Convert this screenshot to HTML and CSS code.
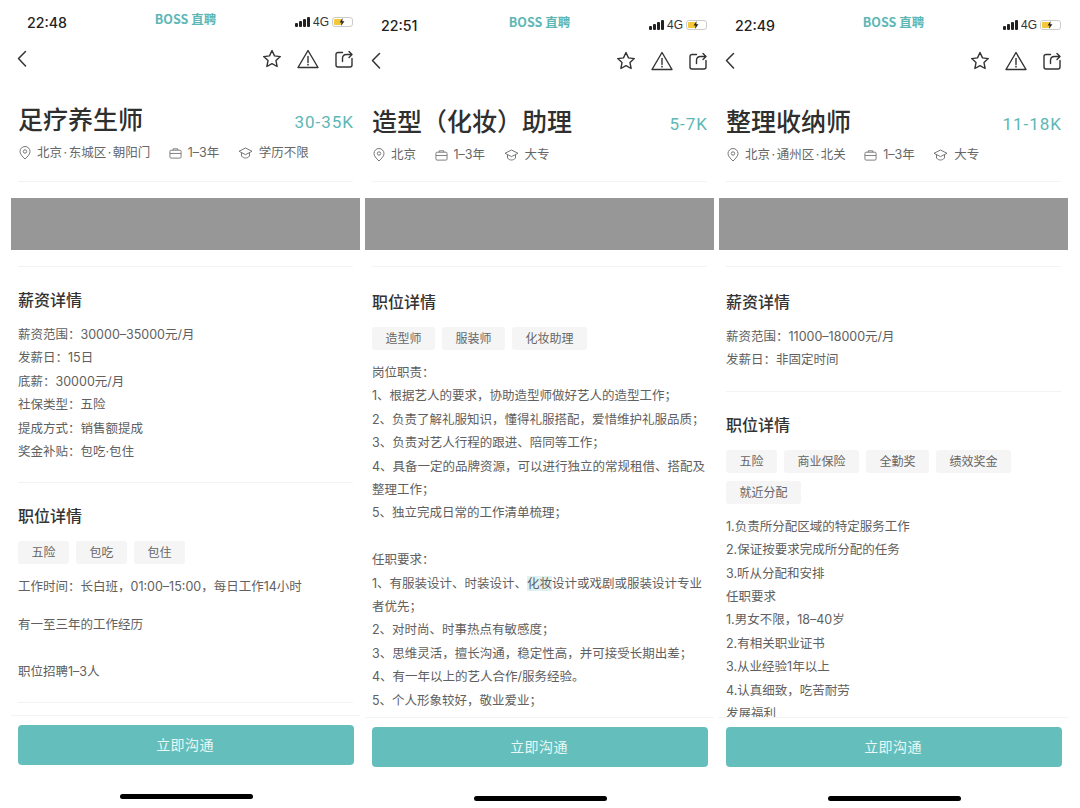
FILE: index.html
```html
<!DOCTYPE html>
<html lang="zh-CN">
<head>
    <meta charset="UTF-8">
    <meta name="viewport" content="width=device-width, initial-scale=1.0">
    <title>BOSS直聘 职位详情</title>
    <link rel="stylesheet" href="styles.css">
</head>
<body>
    <svg class="sprites" width="0" height="0">
        <symbol id="i-back" viewBox="0 0 12 20"><path d="M9.5 2.5 2.5 9.5l7 7.5" fill="none" stroke="currentColor" stroke-width="1.5" stroke-linecap="round" stroke-linejoin="round"/></symbol>
        <symbol id="i-star" viewBox="0 0 20 20"><path d="M10 1.500l2.500 5.400 5.800.7-4.300 4 1.100 5.900-5.100-2.900-5.100 2.900 1.100-5.900-4.300-4 5.800-.7z" fill="none" stroke="currentColor" stroke-width="1.400" stroke-linejoin="round"/></symbol>
        <symbol id="i-warn" viewBox="0 0 22 20"><path d="M11 1.500 21 18.500H1z" fill="none" stroke="currentColor" stroke-width="1.400" stroke-linejoin="round"/><path d="M11 7.500v6" stroke="currentColor" stroke-width="1.400" stroke-linecap="round"/><circle cx="11" cy="15.700" r=".85" fill="currentColor"/></symbol>
        <symbol id="i-share" viewBox="0 0 18 18"><path d="M7.500 2.500H3a2 2 0 0 0-2 2v10.500a2 2 0 0 0 2 2h12a2 2 0 0 0 2-2V8.500" fill="none" stroke="currentColor" stroke-width="1.400" stroke-linecap="round"/><path d="M7.500 11.500V8.500c0-2.500 1.500-4 4-4h5M14 1.500l3 3-3 3" fill="none" stroke="currentColor" stroke-width="1.400" stroke-linecap="round" stroke-linejoin="round"/></symbol>
        <symbol id="i-pin" viewBox="0 0 12 14"><path d="M6 13C3 10.200 1 7.900 1 5.500a5 5 0 0 1 10 0C11 7.900 9 10.200 6 13z" fill="none" stroke="currentColor" stroke-width="1"/><circle cx="6" cy="5.500" r="1.700" fill="none" stroke="currentColor"/></symbol>
        <symbol id="i-case" viewBox="0 0 14 12"><rect x="1" y="3" width="12" height="8.500" rx="1.200" fill="none" stroke="currentColor"/><path d="M4.500 3V1.500h5V3M1 6.500h12" fill="none" stroke="currentColor"/></symbol>
        <symbol id="i-cap" viewBox="0 0 15 12"><path d="M7.500 1 14 4.300 7.500 7.600 1 4.300z" fill="none" stroke="currentColor" stroke-linejoin="round"/><path d="M3.500 6v3c1 1.400 2.500 2 4 2s3-.6 4-2V6" fill="none" stroke="currentColor"/></symbol>
        <symbol id="i-bolt" viewBox="0 0 6 8"><path d="M3.600 0 .6 4.500h2L2 8l3.400-4.800H3.300z" fill="currentColor"/></symbol>
    </svg>

    <div class="screens">
        <!-- 足疗养生师 -->
        <div class="phone phone-high">
            <div class="status">
                <span class="time">22:48</span>
                <span class="logo">BOSS 直聘</span>
                <span class="status-right">
                    <span class="signal"><i></i><i></i><i></i><i></i></span>
                    <span class="net">4G</span>
                    <span class="battery"><b></b><svg class="ic-bolt"><use href="#i-bolt"/></svg></span>
                </span>
            </div>
            <div class="nav">
                <svg class="ic-back"><use href="#i-back"/></svg>
                <span class="nav-right">
                    <svg class="ic-star"><use href="#i-star"/></svg>
                    <svg class="ic-warn"><use href="#i-warn"/></svg>
                    <svg class="ic-share"><use href="#i-share"/></svg>
                </span>
            </div>
            <div class="main">
                <div class="head">
                    <h1>足疗养生师</h1>
                    <span class="salary">30-35K</span>
                </div>
                <div class="meta">
                    <span><svg class="ic-pin"><use href="#i-pin"/></svg>北京<i class="dot">·</i>东城区<i class="dot">·</i>朝阳门</span>
                    <span><svg class="ic-case"><use href="#i-case"/></svg>1–3年</span>
                    <span><svg class="ic-cap"><use href="#i-cap"/></svg>学历不限</span>
                </div>
                <div class="banner"></div>
                <div class="section">
                    <h2>薪资详情</h2>
                    <p>薪资范围：30000–35000元/月</p>
                    <p>发薪日：15日</p>
                    <p>底薪：30000元/月</p>
                    <p>社保类型：五险</p>
                    <p>提成方式：销售额提成</p>
                    <p>奖金补贴：包吃·包住</p>
                </div>
                <div class="section">
                    <h2>职位详情</h2>
                    <div class="tags"><span>五险</span><span>包吃</span><span>包住</span></div>
                    <p>工作时间：长白班，01:00–15:00，每日工作14小时</p>
                    <p class="gap">有一至三年的工作经历</p>
                    <p>&nbsp;</p>
                    <p>职位招聘1–3人</p>
                </div>
                <div class="section"></div>
            </div>
            <div class="footer">
                <div class="btn">立即沟通</div>
                <div class="home"></div>
            </div>
        </div>

        <!-- 造型助理 -->
        <div class="phone">
            <div class="status">
                <span class="time">22:51</span>
                <span class="logo">BOSS 直聘</span>
                <span class="status-right">
                    <span class="signal"><i></i><i></i><i></i><i></i></span>
                    <span class="net">4G</span>
                    <span class="battery"><b></b><svg class="ic-bolt"><use href="#i-bolt"/></svg></span>
                </span>
            </div>
            <div class="nav">
                <svg class="ic-back"><use href="#i-back"/></svg>
                <span class="nav-right">
                    <svg class="ic-star"><use href="#i-star"/></svg>
                    <svg class="ic-warn"><use href="#i-warn"/></svg>
                    <svg class="ic-share"><use href="#i-share"/></svg>
                </span>
            </div>
            <div class="main">
                <div class="head">
                    <h1>造型（化妆）助理</h1>
                    <span class="salary">5-7K</span>
                </div>
                <div class="meta">
                    <span><svg class="ic-pin"><use href="#i-pin"/></svg>北京</span>
                    <span><svg class="ic-case"><use href="#i-case"/></svg>1–3年</span>
                    <span><svg class="ic-cap"><use href="#i-cap"/></svg>大专</span>
                </div>
                <div class="banner"></div>
                <div class="section">
                    <h2>职位详情</h2>
                    <div class="tags"><span>造型师</span><span>服装师</span><span>化妆助理</span></div>
                    <p>岗位职责：</p>
                    <p>1、根据艺人的要求，协助造型师做好艺人的造型工作；</p>
                    <p>2、负责了解礼服知识，懂得礼服搭配，爱惜维护礼服品质；</p>
                    <p>3、负责对艺人行程的跟进、陪同等工作；</p>
                    <p>4、具备一定的品牌资源，可以进行独立的常规租借、搭配及整理工作；</p>
                    <p>5、独立完成日常的工作清单梳理；</p>
                    <p>&nbsp;</p>
                    <p>任职要求：</p>
                    <p>1、有服装设计、时装设计、<mark>化妆</mark>设计或戏剧或服装设计专业者优先；</p>
                    <p>2、对时尚、时事热点有敏感度；</p>
                    <p>3、思维灵活，擅长沟通，稳定性高，并可接受长期出差；</p>
                    <p>4、有一年以上的艺人合作/服务经验。</p>
                    <p>5、个人形象较好，敬业爱业；</p>
                    <p>6、有相关工作经验者、熟悉时尚行业者优先考虑；</p>
                </div>
            </div>
            <div class="footer">
                <div class="btn">立即沟通</div>
                <div class="home"></div>
            </div>
        </div>

        <!-- 整理收纳师 -->
        <div class="phone">
            <div class="status">
                <span class="time">22:49</span>
                <span class="logo">BOSS 直聘</span>
                <span class="status-right">
                    <span class="signal"><i></i><i></i><i></i><i></i></span>
                    <span class="net">4G</span>
                    <span class="battery"><b></b><svg class="ic-bolt"><use href="#i-bolt"/></svg></span>
                </span>
            </div>
            <div class="nav">
                <svg class="ic-back"><use href="#i-back"/></svg>
                <span class="nav-right">
                    <svg class="ic-star"><use href="#i-star"/></svg>
                    <svg class="ic-warn"><use href="#i-warn"/></svg>
                    <svg class="ic-share"><use href="#i-share"/></svg>
                </span>
            </div>
            <div class="main">
                <div class="head">
                    <h1>整理收纳师</h1>
                    <span class="salary">11-18K</span>
                </div>
                <div class="meta">
                    <span><svg class="ic-pin"><use href="#i-pin"/></svg>北京<i class="dot">·</i>通州区<i class="dot">·</i>北关</span>
                    <span><svg class="ic-case"><use href="#i-case"/></svg>1–3年</span>
                    <span><svg class="ic-cap"><use href="#i-cap"/></svg>大专</span>
                </div>
                <div class="banner"></div>
                <div class="section">
                    <h2>薪资详情</h2>
                    <p>薪资范围：11000–18000元/月</p>
                    <p>发薪日：非固定时间</p>
                </div>
                <div class="section">
                    <h2>职位详情</h2>
                    <div class="tags"><span>五险</span><span>商业保险</span><span>全勤奖</span><span>绩效奖金</span><span>就近分配</span></div>
                    <p>1.负责所分配区域的特定服务工作</p>
                    <p>2.保证按要求完成所分配的任务</p>
                    <p>3.听从分配和安排</p>
                    <p>任职要求</p>
                    <p>1.男女不限，18–40岁</p>
                    <p>2.有相关职业证书</p>
                    <p>3.从业经验1年以上</p>
                    <p>4.认真细致，吃苦耐劳</p>
                    <p>发展福利</p>
                </div>
            </div>
            <div class="footer">
                <div class="btn">立即沟通</div>
                <div class="home"></div>
            </div>
        </div>
    </div>
</body>
</html>
```

FILE: styles.css
```css
* {
    box-sizing: border-box;
}
html, body {
    margin: 0;
    background: #fff;
}
body {
    width: 1080px;
    height: 808px;
    overflow: hidden;
    font-family: Inter, "Noto Sans CJK SC", sans-serif;
    color: #606060;
}
.sprites {
    position: absolute;
}
.screens {
    display: flex;
    gap: 5px;
    padding-left: 11px;
}
.phone {
    width: 349px;
    height: 808px;
    display: flex;
    flex-direction: column;
    overflow: hidden;
}
svg {
    display: block;
    flex: none;
}

/* status bar */
.status {
    height: 44px;
    padding: 6px 7px 0 16px;
    display: flex;
    align-items: center;
    justify-content: space-between;
    position: relative;
}
.time {
    font-size: 14.200px;
    font-weight: 500;
    color: #222;
}
.logo {
    position: absolute;
    left: 0;
    right: 0;
    top: 13px;
    text-align: center;
    font-family: "Noto Sans CJK SC", sans-serif;
    font-size: 12.500px;
    font-weight: 700;
    line-height: 18px;
    color: #5cb7b6;
}
.status-right {
    display: flex;
    align-items: center;
    gap: 3px;
}
.signal {
    display: flex;
    align-items: flex-end;
    gap: 1px;
    height: 10px;
}
.signal i {
    width: 3px;
    background: #222;
    border-radius: 1px;
}
.signal i:nth-child(1) { height: 4px; }
.signal i:nth-child(2) { height: 6px; }
.signal i:nth-child(3) { height: 8px; }
.signal i:nth-child(4) { height: 10px; }
.net {
    font-family: "Liberation Sans", sans-serif;
    font-size: 12px;
    color: #333;
}
.battery {
    width: 21px;
    height: 10px;
    border: 1px solid #ccc;
    border-radius: 3px;
    padding: 1px;
    position: relative;
}
.battery b {
    display: block;
    width: 8px;
    height: 6px;
    background: #f5c83c;
    border-radius: 1px;
}
.ic-bolt {
    position: absolute;
    left: 6px;
    top: 0;
    width: 6px;
    height: 8px;
    color: #222;
}

/* nav */
.nav {
    height: 32px;
    padding: 2px 7px 0;
    display: flex;
    align-items: center;
    justify-content: space-between;
    color: #333;
}
.nav-right {
    display: flex;
    align-items: center;
}
.ic-back { width: 12px; height: 20px; margin-left: -2px; }
.ic-star { width: 20px; height: 20px; }
.ic-warn { width: 22px; height: 20px; margin-left: 15px; }
.ic-share { width: 18px; height: 18px; margin-left: 16px; }

/* main */
.main {
    flex: 1;
    min-height: 0;
    overflow: hidden;
    padding: 0 7px;
}
.head {
    display: flex;
    align-items: center;
    justify-content: space-between;
    margin-top: 25px;
    height: 38px;
}
h1 {
    margin: 0;
    font-family: "Noto Sans CJK SC", sans-serif;
    font-size: 25px;
    font-weight: 500;
    color: #2f2f2f;
    line-height: 38px;
}
.salary {
    font-family: Roboto, sans-serif;
    font-size: 17px;
    letter-spacing: 1px;
    margin: 8px -1px 0 0;
    color: #5cb7b6;
}
.meta {
    display: flex;
    gap: 17.500px;
    height: 22px;
    margin-top: 5px;
    font-size: 12.500px;
    line-height: 22px;
    color: #666;
}
.meta span {
    display: flex;
    align-items: center;
}
.meta svg {
    color: #777;
    margin-right: 6px;
    margin-left: 1px;
}
.dot {
    font-style: normal;
    padding: 0 1.500px;
}
.ic-pin { width: 12px; height: 14px; }
.ic-case { width: 13px; height: 12px; }
.ic-cap { width: 15px; height: 12px; }
.banner {
    height: 52px;
    margin: 32px -7px 0;
    background: #979797;
    position: relative;
}
.banner::before {
    content: "";
    position: absolute;
    left: 7px;
    right: 7px;
    top: -17px;
    border-top: 1px solid #f3f3f3;
}
.banner::after {
    content: "";
    position: absolute;
    left: 7px;
    right: 7px;
    bottom: -17px;
    border-top: 1px solid #f3f3f3;
}
.section {
    padding-top: 22px;
    padding-bottom: 19px;
    border-bottom: 1px solid #f3f3f3;
}
.banner + .section {
    padding-top: 25px;
    margin-top: 16px;
}
h2 {
    margin: 0 0 14px;
    font-family: "Noto Sans CJK SC", sans-serif;
    font-size: 16px;
    font-weight: 500;
    line-height: 20px;
    color: #333;
}
p {
    margin: 0;
    font-size: 12.500px;
    line-height: 23.400px;
}
p.gap {
    margin-top: 14px;
}
mark {
    background: #dff1f0;
    color: inherit;
}
.tags {
    display: flex;
    flex-wrap: wrap;
    gap: 8px 7px;
    margin-top: 16px;
    margin-bottom: 11px;
}
.tags span {
    height: 23px;
    padding: 0 13.500px;
    background: #f5f5f5;
    border-radius: 3px;
    font-size: 12px;
    line-height: 23px;
    color: #666;
}

/* footer */
.footer {
    height: 91px;
    flex: none;
    padding: 9px 6px 0 7px;
    border-top: 1px solid #f3f3f3;
    background: #fff;
}
.btn {
    height: 40px;
    padding-right: 2px;
    background: #64bfbc;
    border-radius: 4px;
    text-align: center;
    font-family: "Noto Sans CJK SC", sans-serif;
    font-size: 14px;
    letter-spacing: .4px;
    line-height: 38px;
    color: #e9f7f6;
}
.home {
    width: 133px;
    height: 5px;
    margin: 29px auto 0;
    background: #000;
    border-radius: 3px;
}

/* first shot sits two pixels higher */
.phone-high .status { padding-top: 2px; height: 42px; }
.phone-high .logo { top: 10px; }
.phone-high .banner { margin-top: 34px; }
.phone-high .banner + .section { margin-top: 14px; }
.phone-high .footer { height: 93px; }
```
